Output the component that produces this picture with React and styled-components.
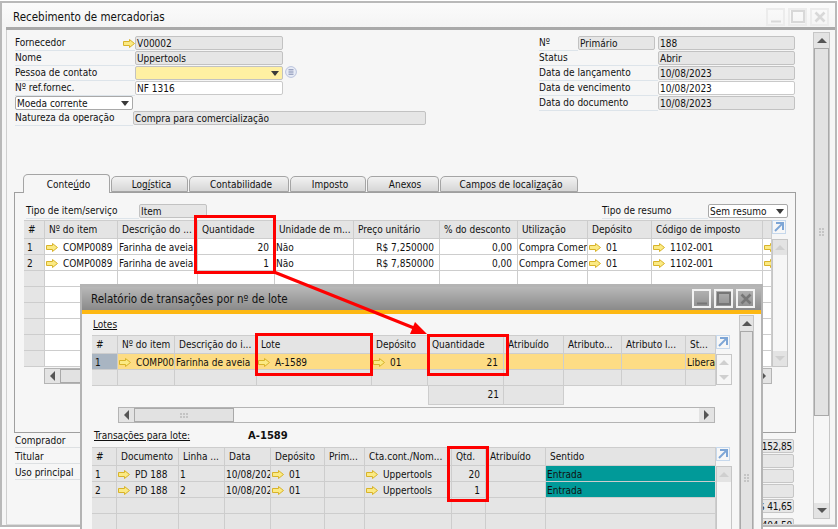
import React from 'react'
import styled, { createGlobalStyle } from 'styled-components'

const GlobalStyle = createGlobalStyle`
  html, body {
    margin: 0;
    padding: 0;
    background: #fff;
  }
  * {
    box-sizing: border-box;
  }
`

const Page = styled.div`
  position: relative;
  width: 838px;
  height: 529px;
  overflow: hidden;
  background: #fff;
  color: #111;
  font-family: 'DejaVu Sans Condensed', 'DejaVu Sans', sans-serif;
  font-size: 10px;
`

/* ---------- window chrome ---------- */

const MainWindow = styled.div`
  margin-top: 1px;
  width: 837px;
  height: 526px;
  border: 2px solid #b9b9b9;
  background: #f6f6f6;
  display: flex;
  flex-direction: column;
`

const TitleBar = styled.div`
  height: 24px;
  padding: 3px 6px 0 11px;
  display: flex;
  align-items: center;
  justify-content: space-between;
  font-size: 11.5px;
  background: linear-gradient(#fbfbfb, #f4f4f4);
`

const TitleStrip = styled.div`
  height: 3px;
  margin-left: 4px;
  background: #a9a9a9;
`

const WinButtons = styled.div`
  display: flex;
  gap: 3px;
`

const WinButton = styled.div`
  width: 19px;
  height: ${p => (p.$active ? 19 : 18)}px;
  border: 2px solid ${p => (p.$active ? '#f2f2f2' : '#ececec')};
  color: ${p => (p.$active ? '#777' : '#d8d8d8')};
  display: flex;
  align-items: center;
  justify-content: center;
`

const MainBody = styled.div`
  flex: 1;
  height: 489px;
  margin-left: 4px;
  border-left: 1px solid #cfcfcf;
  border-bottom: 1px solid #dcdcdc;
  display: flex;
  overflow: hidden;
`

const Content = styled.div`
  width: 792px;
  padding: 6px 0 0 7px;
  flex-shrink: 0;
`

const FormArea = styled.div`
  margin-left: 1px;
  height: 138px;
  display: flex;
  justify-content: space-between;
  width: 780px;
`

const LeftForm = styled.div`
  width: 411px;
`

const RightForm = styled.div`
  width: 256px;
`

const FormRow = styled.div`
  height: 15px;
  display: flex;
  align-items: flex-start;
`

const FieldLabel = styled.div`
  width: ${p => p.$w}px;
  height: 15px;
  line-height: 14px;
  border-bottom: 1px solid #dde4ea;
  display: flex;
  align-items: center;
  justify-content: space-between;
  white-space: nowrap;
  flex-shrink: 0;
`

const Field = styled.div`
  width: ${p => p.$w}px;
  height: 14px;
  margin-right: ${p => p.$mr || 0}px;
  padding: 0 1px;
  line-height: 13px;
  border: 1px solid ${p => (p.$tone === 'white' ? '#c9c9c9' : '#c2c2c2')};
  border-radius: 2px;
  background: ${p => ({ white: '#fff', yellow: '#fff0a2' }[p.$tone] || '#e6e6e6')};
  display: flex;
  align-items: center;
  justify-content: space-between;
  white-space: nowrap;
  overflow: hidden;
  flex-shrink: 0;
`

const SelectBox = styled(Field)`
  border-color: #a9a9a9;
  margin: 0 1px 0 0;
`

const Triangle = styled.span`
  width: 0;
  height: 0;
  margin-right: 2px;
  border-left: 4px solid transparent;
  border-right: 4px solid transparent;
  border-top: 5px solid #3a3a3a;
`

const ListIcon = () => (
  <svg width="12" height="12" viewBox="0 0 12 12" style={{ marginLeft: 2 }}>
    <circle cx="6" cy="6" r="5.4" fill="#e8ecf6" stroke="#b9c2dc" />
    <path d="M3.5 3.8h5M3.5 6h5M3.5 8.2h5" stroke="#7d88ad" strokeWidth="1" />
  </svg>
)

const LinkArrow = () => (
  <svg width="12" height="9" viewBox="0 0 12 9" style={{ flexShrink: 0 }}>
    <path d="M.5 2.5h6v-2l5 4-5 4v-2h-6z" fill="#fbea84" stroke="#d8b32a" />
  </svg>
)

/* ---------- tabs ---------- */

const TabStrip = styled.div`
  height: 18px;
  margin-left: 9px;
  display: flex;
  align-items: flex-end;
  position: relative;
  z-index: 1;
`

const Tab = styled.div`
  width: ${p => p.$w}px;
  height: ${p => (p.$active ? 19 : 16)}px;
  margin-bottom: ${p => (p.$active ? -1 : 0)}px;
  margin-right: 1px;
  padding-left: 4px;
  border: 1px solid #a5a5a5;
  border-bottom: ${p => (p.$active ? 'none' : '1px solid #a5a5a5')};
  border-radius: 5px 4px 0 0;
  background: ${p => (p.$active ? '#f6f6f6' : 'linear-gradient(#f2f2f2, #d6d6d6)')};
  text-align: center;
  white-space: nowrap;
  line-height: ${p => (p.$active ? 19 : 15)}px;
`

const TabPanel = styled.div`
  width: 782px;
  height: 241px;
  padding: 11px 0 0 9px;
  border: 1px solid #9f9f9f;
  background: #f6f6f6;
`

const TypeRow = styled.div`
  width: 765px;
  height: 16px;
  padding-left: 2px;
  display: flex;
`

const Spacer = styled.div`
  flex: 1;
`

/* ---------- grids ---------- */

const GridWrap = styled.div`
  display: flex;
`

const Table = styled.div`
  width: ${p => p.$w}px;
  display: grid;
  grid-template-columns: ${p => p.$cols};
  grid-template-rows: 19px;
  grid-auto-rows: 16px;
  flex-shrink: 0;
`

const Head = styled.div`
  padding-left: 4px;
  line-height: 17px;
  background: #e4e4e4;
  border-right: 1px solid #cdcdcd;
  border-top: 1px solid #cdcdcd;
  border-bottom: 1px solid #cdcdcd;
  white-space: nowrap;
  overflow: hidden;
`

const CELL_BG = {
  white: '#fff',
  gray: '#e5e5e5',
  amber: '#fddc84',
  teal: '#019a99',
  slate: '#a9b5c2',
}

const Cell = styled.div`
  padding: 2px 5px 0 ${p => (p.$index ? 3 : 1)}px;
  line-height: 13px;
  background: ${p => CELL_BG[p.$tone] || 'transparent'};
  border-right: 1px solid ${p => (p.$tone === 'teal' ? '#e0e0e0' : '#cdcdcd')};
  border-bottom: 1px solid #cdcdcd;
  display: flex;
  align-items: center;
  justify-content: ${p => (p.$right ? 'flex-end' : 'flex-start')};
  gap: 5px;
  white-space: nowrap;
  overflow: hidden;
`

const DataTable = ({ width, cols, heads, rows, firstTone = 'white', restTone = 'white', indexTone = 'gray' }) => (
  <Table $w={width} $cols={cols}>
    {heads.map((h, i) => <Head key={i}>{h}</Head>)}
    {rows.map((row, r) =>
      row.map((c, i) => {
        const cell = typeof c === 'string' ? { text: c } : c
        const rowTone = r === 0 ? firstTone : restTone
        const tone = i === 0 ? (cell.text ? indexTone : 'gray') : cell.tone || rowTone
        return (
          <Cell key={`${r}-${i}`} $tone={tone} $right={cell.right} $index={i === 0}>
            {cell.link && <LinkArrow />}
            {cell.text}
          </Cell>
        )
      })
    )}
  </Table>
)

const SideColumn = styled.div`
  width: 16px;
  flex-shrink: 0;
`

const ExpandBox = styled.div`
  width: 14px;
  height: 19px;
`

const ExpandIcon = () => (
  <ExpandBox>
    <svg width="14" height="14" viewBox="0 0 14 14">
      <rect x=".5" y=".5" width="13" height="13" fill="#f7f7f7" stroke="#c6d8ec" />
      <path d="M4 3h7v7M10.6 3.4 3 11" fill="none" stroke="#7ea6d6" strokeWidth="2" />
    </svg>
  </ExpandBox>
)

const VBar = styled.div`
  height: ${p => p.$h}px;
  width: 16px;
  border: 1px solid #c6c6c6;
  background: #f6f6f6;
  display: flex;
  flex-direction: column;
  justify-content: ${p => (p.$spread ? 'space-between' : 'flex-start')};
  flex-shrink: 0;
`

const BarButton = styled.div`
  height: 15px;
  background: ${p => (p.$plain ? 'transparent' : '#e3e3e3')};
  display: flex;
  align-items: center;
  justify-content: center;
  flex-shrink: 0;
`

const Caret = styled.span`
  width: 0;
  height: 0;
  ${p => {
    const c = p.$faint ? '#cfcfcf' : '#555'
    if (p.$dir === 'up') return `border-left: 5px solid transparent; border-right: 5px solid transparent; border-bottom: 5px solid ${c};`
    if (p.$dir === 'down') return `border-left: 5px solid transparent; border-right: 5px solid transparent; border-top: 5px solid ${c};`
    if (p.$dir === 'left') return `border-top: 5px solid transparent; border-bottom: 5px solid transparent; border-right: 5px solid ${c};`
    return `border-top: 5px solid transparent; border-bottom: 5px solid transparent; border-left: 5px solid ${c};`
  }}
`

const Thumb = styled.div`
  height: ${p => p.$h}px;
  background: #e2e2e2;
  border: 1px solid #a9a9a9;
  display: flex;
  align-items: center;
  justify-content: center;
  flex-shrink: 0;
`

// little dotted handle in the middle of a scrollbar thumb
const Grip = ({ flat }) => {
  const dots = []
  for (let a = 0; a < 3; a++) {
    for (let b = 0; b < 2; b++) {
      dots.push(flat ? [a * 3, b * 3] : [b * 3, a * 3])
    }
  }
  return (
    <svg width={flat ? 8 : 5} height={flat ? 5 : 8}>
      {dots.map(([x, y], i) => <rect key={i} x={x} y={y} width="2" height="2" fill="#c4c4c4" />)}
    </svg>
  )
}

const HBar = styled.div`
  width: ${p => p.$w}px;
  height: 16px;
  margin-left: ${p => p.$left || 0}px;
  margin-top: ${p => p.$mt || 0}px;
  border: 1px solid #b4b4b4;
  background: #f6f6f6;
  display: flex;
  justify-content: space-between;
  flex-shrink: 0;
`

const HGroup = styled.div`
  display: flex;
`

const HThumb = styled.div`
  width: ${p => p.$w}px;
  height: 14px;
  background: #e2e2e2;
  border: 1px solid #a9a9a9;
  display: flex;
  align-items: center;
  justify-content: center;
`

const HButton = styled(BarButton)`
  width: 15px;
  height: 14px;
`

/* ---------- below the tabs ---------- */

const BottomArea = styled.div`
  width: 781px;
  margin-left: 1px;
  display: flex;
  justify-content: space-between;
`

const BottomLabels = styled.div`
  width: 200px;
`

const BottomLabel = styled.div`
  height: ${p => (p.$first ? 15 : 16)}px;
  line-height: ${p => (p.$first ? 15 : 17)}px;
  border-bottom: 1px solid #dde0e2;
`

const Totals = styled.div`
  width: 129px;
  padding-top: 6px;
`

const TotalField = styled.div`
  width: 127px;
  height: 14px;
  margin-bottom: ${p => p.$gap || 1}px;
  padding-right: 1px;
  line-height: 13px;
  letter-spacing: -0.2px;
  text-align: right;
  background: #e6e6e6;
  border: 1px solid #c6c6c6;
  border-radius: 2px;
`

const MainScroll = styled(VBar)`
  height: 487px;
  margin-top: 2px;
  margin-left: 14px;
  width: 17px;
`

/* ---------- popup report ---------- */

const ReportWindow = styled.div`
  position: absolute;
  left: 80px;
  top: 284px;
  width: 683px;
  height: 260px;
  border: 2px solid #b4b4b4;
  border-top-width: 3px;
  background: #f6f6f6;
  overflow: hidden;
`

const ReportTitle = styled.div`
  height: 23px;
  padding: 0 6px 0 9px;
  display: flex;
  align-items: center;
  justify-content: space-between;
  font-size: 11.5px;
  background: linear-gradient(#b8b8b8, #8a8a8a);
`

const ReportStrip = styled.div`
  height: 4px;
  background: #fdb813;
`

const ReportBody = styled.div`
  display: flex;
  padding-left: 10px;
`

const ReportMain = styled.div`
  width: 640px;
`

const SectionLabel = styled.div`
  height: ${p => p.$h}px;
  padding-top: ${p => p.$pt}px;
  padding-left: ${p => p.$left || 1}px;
  display: flex;
  line-height: 12px;
`

const Underlined = styled.span`
  text-decoration: underline;
`

const BatchName = styled.b`
  margin-left: 58px;
  font-family: 'DejaVu Sans', sans-serif;
  font-size: 10px;
`

const TotalsRow = styled.div`
  height: 19px;
  margin-left: 336px;
  display: grid;
  grid-template-columns: 76px 60px;
  width: 136px;
`

const TotalCell = styled.div`
  padding-right: 4px;
  line-height: 18px;
  text-align: right;
  background: #e5e5e5;
  border-right: 1px solid #cdcdcd;
  border-bottom: 1px solid #cdcdcd;
  border-left: ${p => (p.$first ? '1px solid #cdcdcd' : 'none')};
`

const ReportScroll = styled(VBar)`
  margin-left: 7px;
  margin-top: 1px;
  height: 320px;
  width: 15px;
`

/* ---------- overlays ---------- */

const RedBox = styled.div`
  position: absolute;
  left: ${p => p.$x}px;
  top: ${p => p.$y}px;
  width: ${p => p.$w}px;
  height: ${p => p.$h}px;
  border: 3px solid #fe0000;
  pointer-events: none;
`

const ArrowLayer = styled.svg`
  position: absolute;
  left: 0;
  top: 0;
`

const link = text => ({ text, link: true })
const right = text => ({ text, right: true })

const mainHeads = ['#', 'Nº do item', 'Descrição do ...', 'Quantidade', 'Unidade de m...', 'Preço unitário', '% do desconto', 'Utilização', 'Depósito', 'Código de imposto', '']
const mainRow = (n, price, qty) => [
  n, link('COMP0089'), 'Farinha de aveia', right(qty), 'Não', right(price), right('0,00'), 'Compra Comercialização', link('01'), link('1102-001'), link(''),
]
const emptyRow = n => Array.from({ length: n }, () => '')
const mainRows = [
  mainRow('1', 'R$ 7,250000', '20'),
  mainRow('2', 'R$ 7,850000', '1'),
  ...Array.from({ length: 6 }, () => emptyRow(11)),
]

const lotHeads = ['#', 'Nº do item', 'Descrição do i...', 'Lote', 'Depósito', 'Quantidade', 'Atribuído', 'Atributo...', 'Atributo l...', 'St...']
const lotRows = [
  ['1', link('COMP0089'), 'Farinha de aveia', link('A-1589'), link('01'), right('21'), '', '', '', 'Liberado'],
  emptyRow(10),
]

const txHeads = ['#', 'Documento', 'Linha ...', 'Data', 'Depósito', 'Prim...', 'Cta.cont./Nom...', 'Qtd.', 'Atribuído', 'Sentido']
const txRow = (n, qty) => [
  n, link('PD 188'), n, '10/08/2023', link('01'), '', link('Uppertools'), right(qty), '', { text: 'Entrada', tone: 'teal' },
]
const txRows = [txRow('1', '20'), txRow('2', '1'), emptyRow(10), emptyRow(10)]

const WindowButtons = ({ active }) => (
  <WinButtons>
    <WinButton $active={active}>
      <svg width="12" height="12" viewBox="0 0 12 12"><path d="M1 10.5h10" stroke="currentColor" strokeWidth="2" /></svg>
    </WinButton>
    <WinButton $active={active}>
      <svg width="14" height="13" viewBox="0 0 14 13"><rect x="1" y="1" width="12" height="11" fill="none" stroke="currentColor" strokeWidth="2" /></svg>
    </WinButton>
    <WinButton $active={active}>
      <svg width="12" height="12" viewBox="0 0 12 12"><path d="M1.5 1.5l9 9M10.5 1.5l-9 9" stroke="currentColor" strokeWidth="2.6" /></svg>
    </WinButton>
  </WinButtons>
)

const App = () => {
  return (
    <Page>
      <GlobalStyle />
      <MainWindow>
        <TitleBar>
          <span>Recebimento de mercadorias</span>
          <WindowButtons />
        </TitleBar>
        <TitleStrip />
        <MainBody>
          <Content>
            <FormArea>
              <LeftForm>
                <FormRow>
                  <FieldLabel $w={120}>Fornecedor<LinkArrow /></FieldLabel>
                  <Field $w={148}>V00002</Field>
                </FormRow>
                <FormRow>
                  <FieldLabel $w={120}>Nome</FieldLabel>
                  <Field $w={148}>Uppertools</Field>
                </FormRow>
                <FormRow>
                  <FieldLabel $w={120}>Pessoa de contato</FieldLabel>
                  <Field $w={148} $tone="yellow"><span /><Triangle /></Field>
                  <ListIcon />
                </FormRow>
                <FormRow>
                  <FieldLabel $w={120}>Nº ref.fornec.</FieldLabel>
                  <Field $w={148} $tone="white">NF 1316</Field>
                </FormRow>
                <FormRow>
                  <SelectBox $w={118} $tone="white">Moeda corrente<Triangle /></SelectBox>
                </FormRow>
                <FormRow>
                  <FieldLabel $w={118}>Natureza da operação</FieldLabel>
                  <Field $w={293}>Compra para comercialização</Field>
                </FormRow>
              </LeftForm>
              <RightForm>
                <FormRow>
                  <FieldLabel $w={39}>Nº</FieldLabel>
                  <Field $w={77} $mr={3}>Primário</Field>
                  <Field $w={137}>188</Field>
                </FormRow>
                <FormRow>
                  <FieldLabel $w={119}>Status</FieldLabel>
                  <Field $w={137}>Abrir</Field>
                </FormRow>
                <FormRow>
                  <FieldLabel $w={119}>Data de lançamento</FieldLabel>
                  <Field $w={137}>10/08/2023</Field>
                </FormRow>
                <FormRow>
                  <FieldLabel $w={119}>Data de vencimento</FieldLabel>
                  <Field $w={137} $tone="white">10/08/2023</Field>
                </FormRow>
                <FormRow>
                  <FieldLabel $w={119}>Data do documento</FieldLabel>
                  <Field $w={137}>10/08/2023</Field>
                </FormRow>
              </RightForm>
            </FormArea>
            <TabStrip>
              <Tab $active $w={87}>Conte<u>ú</u>do</Tab>
              <Tab $w={77}>Log<u>í</u>stica</Tab>
              <Tab $w={100}>Contabilidade</Tab>
              <Tab $w={76}>Imposto</Tab>
              <Tab $w={72}>Anexos</Tab>
              <Tab $w={138}>Campos de locali<u>z</u>ação</Tab>
            </TabStrip>
            <TabPanel>
              <TypeRow>
                <FieldLabel $w={113}>Tipo de item/serviço</FieldLabel>
                <Field $w={68}>Item</Field>
                <Spacer />
                <FieldLabel $w={106}>Tipo de resumo</FieldLabel>
                <SelectBox $w={80} $tone="white">Sem resumo<Triangle /></SelectBox>
              </TypeRow>
              <GridWrap>
                <DataTable
                  width={748}
                  cols="21px 73px 80px 77px 79px 86px 78px 70px 64px 111px 9px"
                  heads={mainHeads}
                  rows={mainRows}
                />
                <SideColumn>
                  <ExpandIcon />
                  <VBar $h={128} $spread>
                    <BarButton><Caret $dir="up" $faint /></BarButton>
                    <BarButton><Caret $dir="down" $faint /></BarButton>
                  </VBar>
                </SideColumn>
              </GridWrap>
              <HBar $w={728} $left={20} $mt={1}>
                <HGroup>
                  <HButton><Caret $dir="left" /></HButton>
                  <HThumb $w={100}><Grip flat /></HThumb>
                </HGroup>
                <HButton><Caret $dir="right" /></HButton>
              </HBar>
            </TabPanel>
            <BottomArea>
              <BottomLabels>
                <BottomLabel $first>Comprador</BottomLabel>
                <BottomLabel>Titular</BottomLabel>
                <BottomLabel>Uso principal</BottomLabel>
              </BottomLabels>
              <Totals>
                <TotalField>R$ 152,85</TotalField>
                <TotalField />
                <TotalField />
                <TotalField />
                <TotalField $gap={5}>R$ 41,65</TotalField>
                <TotalField>R$ 404,50</TotalField>
              </Totals>
            </BottomArea>
          </Content>
          <MainScroll $spread>
            <div>
              <BarButton><Caret $dir="up" /></BarButton>
              <Thumb $h={368}><Grip /></Thumb>
            </div>
            <BarButton><Caret $dir="down" /></BarButton>
          </MainScroll>
        </MainBody>
      </MainWindow>

      <ReportWindow>
        <ReportTitle>
          <span>Relatório de transações por nº de lote</span>
          <WindowButtons active />
        </ReportTitle>
        <ReportStrip />
        <ReportBody>
          <ReportMain>
            <SectionLabel $h={21} $pt={5}>
              <Underlined>Lotes</Underlined>
            </SectionLabel>
            <GridWrap>
              <DataTable
                width={624}
                cols="26px 57px 82px 115px 56px 76px 60px 58px 64px 30px"
                heads={lotHeads}
                rows={lotRows}
                firstTone="amber"
                restTone="gray"
                indexTone="slate"
              />
              <SideColumn>
                <ExpandIcon />
                <VBar $h={31} $spread>
                  <BarButton $plain><Caret $dir="up" $faint /></BarButton>
                  <BarButton $plain><Caret $dir="down" $faint /></BarButton>
                </VBar>
              </SideColumn>
            </GridWrap>
            <TotalsRow>
              <TotalCell $first>21</TotalCell>
              <TotalCell />
            </TotalsRow>
            <HBar $w={597} $left={26} $mt={2}>
              <HGroup>
                <HButton><Caret $dir="left" /></HButton>
                <HThumb $w={100}><Grip flat /></HThumb>
              </HGroup>
              <HButton><Caret $dir="right" /></HButton>
            </HBar>
            <SectionLabel $h={24} $pt={7} $left={2}>
              <Underlined>Transações para lote:</Underlined>
              <BatchName>A-1589</BatchName>
            </SectionLabel>
            <GridWrap>
              <DataTable
                width={624}
                cols="25px 62px 46px 46px 54px 40px 87px 34px 60px 170px"
                heads={txHeads}
                rows={txRows}
                firstTone="gray"
                restTone="gray"
              />
              <SideColumn>
                <ExpandIcon />
                <VBar $h={90}>
                  <BarButton><Caret $dir="up" $faint /></BarButton>
                </VBar>
              </SideColumn>
            </GridWrap>
          </ReportMain>
          <ReportScroll>
            <BarButton><Caret $dir="up" /></BarButton>
            <Thumb $h={294}><Grip /></Thumb>
          </ReportScroll>
        </ReportBody>
      </ReportWindow>

      <ArrowLayer width="838" height="529" viewBox="0 0 838 529">
        <path d="M274 272 414 328" stroke="#fe0000" strokeWidth="3" fill="none" />
        <path d="M427 334 410 334 415 322z" fill="#fe0000" />
      </ArrowLayer>
      <RedBox $x={194} $y={215} $w={82} $h={59} />
      <RedBox $x={255} $y={333} $w={118} $h={43} />
      <RedBox $x={427} $y={334} $w={82} $h={42} />
      <RedBox $x={447} $y={446} $w={42} $h={56} />
    </Page>
  )
}

export default App
